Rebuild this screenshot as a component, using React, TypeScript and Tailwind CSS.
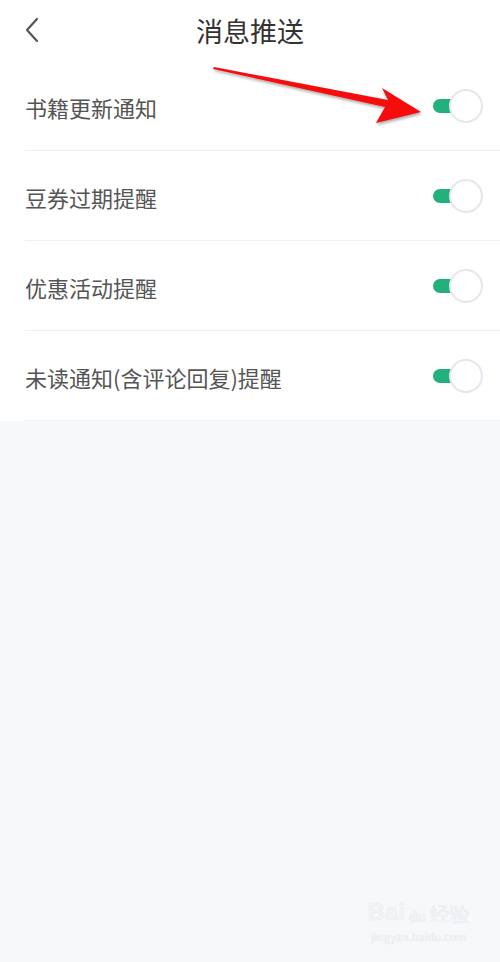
import React from 'react'

const items = ['书籍更新通知', '豆券过期提醒', '优惠活动提醒', '未读通知(含评论回复)提醒']

function Toggle() {
  return (
    <div className="relative w-[50px] h-[34px] shrink-0">
      <div className="absolute left-0 top-[10px] w-[30px] h-[14px] rounded-full bg-[#22b07d]" />
      <div className="absolute right-0 top-0 w-[34px] h-[34px] rounded-full bg-white border-2 border-[#e6e6ee]" />
    </div>
  )
}

export default function App() {
  return (
    <div
      className="relative w-[500px] h-[962px] bg-[#f7f8fa] overflow-hidden"
      style={{ fontFamily: '"Noto Sans CJK SC", "Noto Sans", sans-serif' }}
    >
      <div className="bg-white">
        <div className="relative h-[61px] flex items-center justify-center">
          <svg className="absolute left-[22px] top-[16px]" width="20" height="28" viewBox="0 0 20 28">
            <path d="M15 3 L5 14 L15 25" fill="none" stroke="#555" strokeWidth="2.2" strokeLinecap="round" strokeLinejoin="round" />
          </svg>
          <h1 className="text-[27px] text-[#333] leading-none">消息推送</h1>
        </div>
        {items.map((t) => (
          <div key={t} className="ml-[25px] h-[90px] flex items-center justify-between pr-[17px] border-b border-[#f0f0f2]">
            <span className="text-[22px] text-[#555] leading-none pt-[3px]">{t}</span>
            <Toggle />
          </div>
        ))}
      </div>

      <svg className="absolute left-0 top-0" width="500" height="160" viewBox="0 0 500 160">
        <defs>
          <filter id="sh" x="-10%" y="-50%" width="120%" height="200%">
            <feDropShadow dx="1" dy="2" stdDeviation="1.5" floodColor="#000" floodOpacity="0.35" />
          </filter>
        </defs>
        <polygon
          points="214,67 388,100 382,88 421,112 376,123 385,107 213,69"
          fill="#f50a0a"
          filter="url(#sh)"
        />
      </svg>

      <div className="absolute right-[30px] bottom-[18px] flex flex-col items-center text-white opacity-90">
        <div className="flex items-end gap-1" style={{ fontFamily: '"Liberation Sans", sans-serif' }}>
          <span className="text-[24px] font-bold leading-none text-[#f2f3f6]" style={{ textShadow: '0 0 1px #ccd' }}>Bai</span>
          <span className="text-[14px] font-bold leading-none text-[#f2f3f6]" style={{ textShadow: '0 0 1px #ccd' }}>du</span>
          <span className="text-[20px] leading-none text-[#f2f3f6]" style={{ textShadow: '0 0 1px #ccd' }}>经验</span>
        </div>
        <span className="text-[11px] text-[#f2f3f6] mt-1" style={{ textShadow: '0 0 1px #ccd' }}>jingyan.baidu.com</span>
      </div>
    </div>
  )
}
